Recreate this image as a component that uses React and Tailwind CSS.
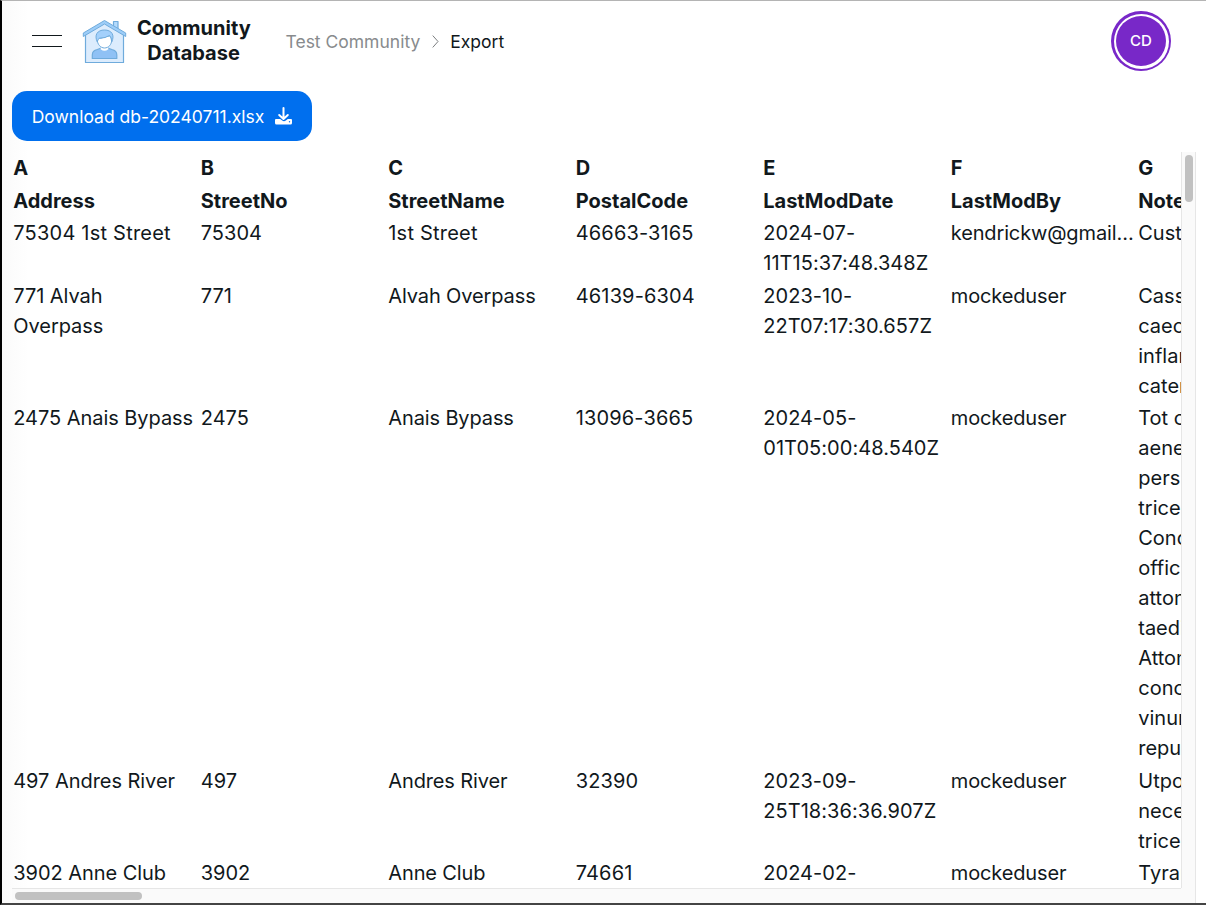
const COLUMNS = ["A", "B", "C", "D", "E", "F", "G"];
const FIELDS = ["Address", "StreetNo", "StreetName", "PostalCode", "LastModDate", "LastModBy", "Notes"];
const ROWS = [
  ["75304 1st Street", "75304", "1st Street", "46663-3165", "2024-07-11T15:37:48.348Z", "kendrickw@gmail.com", ["Cust"]],
  ["771 Alvah Overpass", "771", "Alvah Overpass", "46139-6304", "2023-10-22T07:17:30.657Z", "mockeduser", ["Casso", "caecus", "inflam", "catena"]],
  ["2475 Anais Bypass", "2475", "Anais Bypass", "13096-3665", "2024-05-01T05:00:48.540Z", "mockeduser", ["Tot co", "aeneu", "perspi", "tricesi", "Condu", "officia", "attonb", "taediu", "Attonb", "concul", "vinum", "repudi"]],
  ["497 Andres River", "497", "Andres River", "32390", "2023-09-25T18:36:36.907Z", "mockeduser", ["Utpote", "neces", "tricesi"]],
  ["3902 Anne Club", "3902", "Anne Club", "74661", "2024-02-14T10:12:04.112Z", "mockeduser", ["Tyran"]],
];

const CELL_STYLES = [
  "py-[1.25px] pl-[1.25px] pr-[4px] tracking-[-0.05px]",
  "p-[1.25px]",
  "p-[1.25px] tracking-[-0.12px]",
  "p-[1.25px] tracking-[0.14px]",
  "p-[1.25px] tracking-[0.05px]",
  "truncate p-[1.25px] tracking-[-0.14px]",
  "p-[1.25px]",
];

function Logo() {
  return (
    <svg className="h-[45px] w-[45px] shrink-0" viewBox="0 0 45 45" fill="none" stroke="#6fabdc" strokeWidth="1.2" strokeLinejoin="round">
      <path d="M31.500 9V2.500h4.500V13" fill="#b3dafc" />
      <path d="M3.500 15v28.500h38V15L22.500 3z" fill="#dcecfd" />
      <path d="M1.300 17.500V14L22.500 1.500 43.700 14v3.500L22.500 5z" fill="#9dcdf8" strokeWidth="1" />
      <path d="M10.300 39.500V36q0-4.500 5-5.500l4-1.500v-4h6.500v4l4 1.500q5 1 5 5.500v3.500z" fill="#8fc1f5" />
      <path d="M18.700 27.500h7.600v2.800q-3.800 3-7.600 0z" fill="#fff" stroke="none" />
      <path d="M15.500 19q3 1 7-1 3-1 5-1 2 1 2.200 4c0 4.500-3.200 8-7.200 8s-7.200-4-7.200-8z" fill="#fff" strokeWidth="1" />
      <path d="M15.300 23c-3.300-7 0-12 7.200-12s10.500 5 7.200 12q-.2-5-2.200-6.500-4 2.700-10 2.700-1.800.8-2.200 3.800z" fill="#a3d0fb" strokeWidth="1" />
    </svg>
  );
}

function DownloadIcon() {
  return (
    <svg className="relative left-px h-[18px] w-[18px]" viewBox="0 0 18 18" fill="none">
      <path d="M1 12h4.200l2 1.600q1.800 1.300 3.600 0l2-1.600H16a1 1 0 0 1 1 1V16a1.500 1.500 0 0 1-1.500 1.500h-14A1.500 1.500 0 0 1 0 16V13a1 1 0 0 1 1-1z" fill="#fff" />
      <path d="M8.500 1v10.500M4.200 8l4.300 4 4.300-4" stroke="#fff" strokeWidth="2" strokeLinecap="round" strokeLinejoin="round" />
      <circle cx="14.500" cy="14.700" r=".7" fill="#006fee" />
    </svg>
  );
}

function Header() {
  return (
    <header className="flex h-[80px] shrink-0 items-center pr-[35px] pl-[30px]">
      <button className="flex w-[30px] flex-col gap-[10px]" aria-label="Menu">
        <span className="h-px w-full bg-[#11181c]" />
        <span className="h-px w-full bg-[#11181c]" />
      </button>
      <div className="ml-5 flex items-center gap-[10px]">
        <Logo />
        <div className="w-[113px] text-center text-[20px] leading-[25px] font-bold whitespace-nowrap">
          Community<br />Database
        </div>
      </div>
      <nav className="ml-[35.5px] flex items-center pt-[2px] text-[17.5px]">
        <span className="text-[#888b8d]">Test Community</span>
        <svg className="mx-[7.5px] mb-[2px] h-[15px] w-[15px]" viewBox="0 0 24 24" fill="none" stroke="#7b7e80" strokeWidth="1.6" strokeLinecap="round" strokeLinejoin="round">
          <path d="m8 3 8 9-8 9" />
        </svg>
        <span>Export</span>
      </nav>
      <div className="ml-auto flex h-[60px] w-[60px] items-center justify-center rounded-full bg-[#7828c8]">
        <div className="flex h-[55px] w-[55px] items-center justify-center rounded-full bg-white">
          <div className="flex h-[50px] w-[50px] items-center justify-center rounded-full bg-[#7828c8] text-[15px] font-medium text-white">CD</div>
        </div>
      </div>
    </header>
  );
}

function Row({ cells, bold }) {
  return (
    <div className={bold ? "grid grid-cols-[repeat(7,187.5px)] font-bold" : "grid grid-cols-[repeat(7,187.5px)]"}>
      {cells.map((cell, i) => (
        <div key={i} className={bold ? "p-[1.25px]" : CELL_STYLES[i]}>
          {Array.isArray(cell)
            ? cell.map((line, n) => <div key={n}>{line}</div>)
            : <span className={cell.includes("1st") ? "tracking-[0.22px]" : undefined}>{cell}</span>}
        </div>
      ))}
    </div>
  );
}

export default function App() {
  return (
    <div className="flex h-[905px] w-[1206px] flex-col overflow-hidden border-t border-b-2 border-l-2 border-t-[#b4b4b4] border-b-[#444] border-l-black bg-white bg-[linear-gradient(to_right,#fafafa,#fff_26px)] font-['Inter',sans-serif] text-[#11181c]">
      <Header />
      <main className="flex min-h-0 flex-1 flex-col pt-[10px] pr-[10px] pl-[10px]">
        <button className="flex h-[50px] w-[300px] shrink-0 items-center justify-center gap-[10px] rounded-[15px] bg-[#006fee] text-[17.5px] text-white">
          <span className="pt-[2px]">Download db-20240711.xlsx</span>
          <DownloadIcon />
        </button>
        <div className="mt-[11px] grid min-h-0 flex-1 grid-cols-[1169px_15px] grid-rows-[736px_15px]">
          <div className="overflow-hidden text-[20px] leading-[30px]">
            <Row cells={COLUMNS} bold />
            <Row cells={FIELDS} bold />
            {ROWS.map((row) => <Row key={row[0]} cells={row} />)}
          </div>
          <div className="flex justify-center border-x border-[#e6e6e6] bg-[#fafafa] pt-[3px]">
            <div className="h-[47px] w-2 rounded-full bg-[#c1c1c1]" />
          </div>
          <div className="border-t border-[#e6e6e6] bg-[#fafafa] pt-[3px] pl-[3px]">
            <div className="h-2 w-[127px] rounded-full bg-[#c1c1c1]" />
          </div>
          <div className="border-r border-[#e6e6e6] bg-[#fafafa]" />
        </div>
      </main>
    </div>
  );
}
